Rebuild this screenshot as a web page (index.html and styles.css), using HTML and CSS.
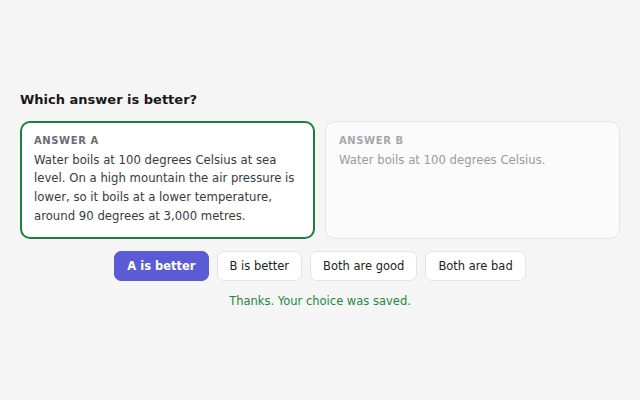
FILE: index.html
```html
<!DOCTYPE html>
<html>
<head>
<meta charset="utf-8">
<link rel="stylesheet" href="styles.css">
</head>
<body>
<main class="wrap">
  <h2 class="title">Which answer is better?</h2>
  <div class="cards">
    <section class="card card-chosen">
      <div class="label">ANSWER A</div>
      <p class="text">Water boils at 100 degrees Celsius at sea level. On a high mountain the air pressure is lower, so it boils at a lower temperature, around 90 degrees at 3,000 metres.</p>
    </section>
    <section class="card card-dim">
      <div class="label">ANSWER B</div>
      <p class="text">Water boils at 100 degrees Celsius.</p>
    </section>
  </div>
  <div class="actions">
    <button class="btn btn-primary">A is better</button>
    <button class="btn">B is better</button>
    <button class="btn">Both are good</button>
    <button class="btn">Both are bad</button>
  </div>
  <p class="status">Thanks. Your choice was saved.</p>
</main>
</body>
</html>
```
FILE: styles.css
```css
* { box-sizing: border-box; }
html, body { margin: 0; padding: 0; }
body {
  background: #f5f5f5;
  font-family: "DejaVu Sans", sans-serif;
  color: #1d1d22;
  min-height: 100vh;
  display: flex;
  align-items: center;
}
.wrap {
  width: 100%;
  padding: 0 20px;
}
.title {
  font-size: 13px;
  line-height: 15px;
  font-weight: bold;
  margin: 0 0 14px;
  color: #18181b;
}
.cards {
  display: grid;
  grid-template-columns: 1fr 1fr;
  gap: 10px;
}
.card {
  background: #fff;
  border: 1px solid #e4e4e7;
  border-radius: 10px;
  padding: 13px 13px 12px;
}
.card-chosen {
  border: 2px solid #1c7f3d;
  padding: 12px;
}
.card-dim {
  background: #fbfbfc;
}
.label {
  font-size: 10px;
  line-height: 12px;
  font-weight: bold;
  letter-spacing: 0.6px;
  color: #6b6b74;
  margin-bottom: 4px;
}
.card-dim .label { color: #a6a6ad; }
.text {
  margin: 0;
  font-size: 11.7px;
  line-height: 18.7px;
  color: #3a3a40;
}
.card-dim .text { color: #9a9aa2; }
.actions {
  display: flex;
  justify-content: center;
  gap: 8px;
  margin-top: 12px;
}
.btn {
  font-family: "DejaVu Sans", sans-serif;
  font-size: 11.5px;
  height: 30px;
  padding: 0 12px;
  background: #fff;
  border: 1px solid #e3e3e6;
  border-radius: 7px;
  color: #1d1d22;
}
.btn-primary {
  background: #5b5bd6;
  border-color: #5b5bd6;
  color: #fff;
  font-weight: bold;
}
.status {
  margin: 13px 0 0;
  line-height: 14px;
  text-align: center;
  font-size: 11.5px;
  color: #23883f;
}
```
